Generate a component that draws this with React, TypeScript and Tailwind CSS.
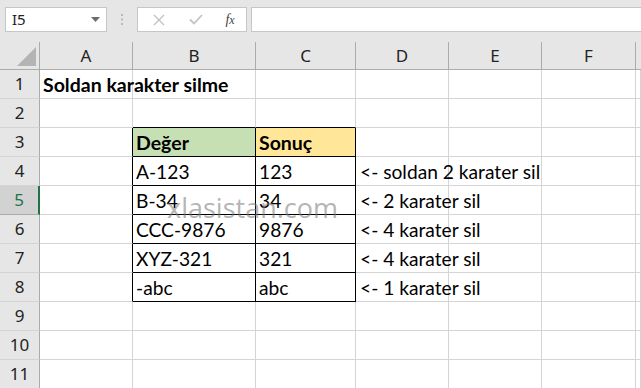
import React from "react";

const cols = ["A", "B", "C", "D", "E", "F", "G"];

type CellData = { text?: string; bold?: boolean; bg?: string };

const data: Record<string, CellData> = {
  "1A": { text: "Soldan karakter silme", bold: true },
  "3B": { text: "Değer", bold: true, bg: "bg-[#c6e0b4]" },
  "3C": { text: "Sonuç", bold: true, bg: "bg-[#ffe699]" },
  "4B": { text: "A-123" },
  "4C": { text: "123" },
  "4D": { text: "<- soldan 2 karater sil" },
  "5B": { text: "B-34" },
  "5C": { text: "34" },
  "5D": { text: "<- 2 karater sil" },
  "6B": { text: "CCC-9876" },
  "6C": { text: "9876" },
  "6D": { text: "<- 4 karater sil" },
  "7B": { text: "XYZ-321" },
  "7C": { text: "321" },
  "7D": { text: "<- 4 karater sil" },
  "8B": { text: "-abc" },
  "8C": { text: "abc" },
  "8D": { text: "<- 1 karater sil" },
};

function Cell({ r, c }: { r: number; c: string }) {
  const d = data[`${r}${c}`];
  const inTable = r >= 3 && r <= 8;
  const rightBlack = inTable && (c === "A" || c === "B" || c === "C");
  const bottomBlack = (c === "B" || c === "C") && r >= 2 && r <= 8;
  return (
    <div
      className={[
        "relative border-r border-b whitespace-nowrap overflow-visible",
        rightBlack ? "border-r-black" : "border-r-[#d4d4d4]",
        bottomBlack ? "border-b-black" : "border-b-[#d4d4d4]",
        d?.bg ?? "bg-white",
      ].join(" ")}
    >
      {d?.text && (
        <span
          className={
            "absolute bottom-[2px] z-10 leading-[23px] text-black " +
            (d.bold ? "font-bold text-[19.5px]" : "font-normal text-[19.2px]") +
            (c === "D" ? " left-[4px]" : " left-[3px]")
          }
          style={{ fontFamily: "Lato, 'Liberation Sans', sans-serif" }}
        >
          {d.text}
        </span>
      )}
    </div>
  );
}

export default function App() {
  const rows = Array.from({ length: 11 }, (_, i) => i + 1);
  return (
    <div
      className="relative w-[641px] h-[388px] overflow-hidden bg-[#e6e6e6]"
      style={{ fontFamily: "'Noto Sans', sans-serif" }}
    >
      {/* Formula bar */}
      <div className="h-[42px] flex items-start pt-[7px] pl-[5px]">
        <div className="w-[102px] h-[25px] bg-white border border-[#c6c6c6] flex items-center justify-between pl-[6px] pr-[6px]">
          <span className="text-[15px] text-[#222] leading-none">I5</span>
          <svg width="9" height="5" viewBox="0 0 9 5">
            <polygon points="0,0 9,0 4.5,5" fill="#6d6d6d" />
          </svg>
        </div>
        <div className="w-[30px] h-[25px] flex items-center justify-center">
          <svg width="3" height="11" viewBox="0 0 3 11">
            <rect x="0" y="0" width="2" height="2" fill="#b9b9b9" />
            <rect x="0" y="4.5" width="2" height="2" fill="#b9b9b9" />
            <rect x="0" y="9" width="2" height="2" fill="#b9b9b9" />
          </svg>
        </div>
        <div className="w-[110px] h-[25px] bg-white border border-[#c6c6c6] flex items-center">
          <div className="w-[38px] flex justify-center ml-[2px]">
            <svg width="12" height="12" viewBox="0 0 12 12">
              <path d="M1 1 L11 11 M11 1 L1 11" stroke="#c3c3c3" strokeWidth="1.4" />
            </svg>
          </div>
          <div className="w-[36px] flex justify-center">
            <svg width="14" height="11" viewBox="0 0 14 11">
              <path d="M1 5.5 L5 9.5 L13 1" stroke="#c3c3c3" strokeWidth="1.8" fill="none" />
            </svg>
          </div>
          <div className="flex-1 flex justify-center">
            <span
              className="text-[14px] italic text-[#444] leading-none"
              style={{ fontFamily: "'Liberation Serif', serif" }}
            >
              f<span className="text-[12px]">x</span>
            </span>
          </div>
        </div>
        <div className="ml-[4px] flex-1 h-[25px] bg-white border border-[#c6c6c6] border-r-0" />
      </div>

      {/* Sheet grid */}
      <div className="grid grid-cols-[40px_93px_123px_100px_93px_93px_94px_1fr] grid-rows-[28px_repeat(11,29px)]">
        {/* corner */}
        <div className="relative bg-[#e6e6e6] border-r border-b border-[#ababab]">
          <svg className="absolute left-[17px] top-[5px]" width="19" height="19" viewBox="0 0 19 19">
            <polygon points="19,0 19,19 0,19" fill="#b4b4b4" />
          </svg>
        </div>
        {cols.map((c, i) => (
          <div
            key={c}
            className={
              "bg-[#e6e6e6] border-b border-b-[#ababab] flex items-center justify-center text-[17px] text-[#222] " +
              (i < 6 ? "border-r border-r-[#ababab]" : "")
            }
          >
            {c === "G" ? "" : c}
          </div>
        ))}
        {rows.map((r) => (
          <React.Fragment key={r}>
            <div
              className={
                "flex items-center justify-center text-[17px] border-b " +
                (r === 5
                  ? "bg-[#d2d2d2] text-[#217346] border-r-2 border-r-[#217346] border-b-[#ababab]"
                  : "bg-[#e6e6e6] text-[#222] border-r border-r-[#ababab] border-b-[#d4d4d4]")
              }
            >
              {r}
            </div>
            {cols.map((c) => (
              <Cell key={c} r={r} c={c} />
            ))}
          </React.Fragment>
        ))}
      </div>

      {/* Watermark */}
      <div
        className="absolute left-[167px] top-[193px] text-[27px] leading-[30px] text-[#7a7a7a] opacity-55 z-20 pointer-events-none"
        style={{ fontFamily: "'Open Sans', sans-serif" }}
      >
        xlasistan.com
      </div>
    </div>
  );
}
